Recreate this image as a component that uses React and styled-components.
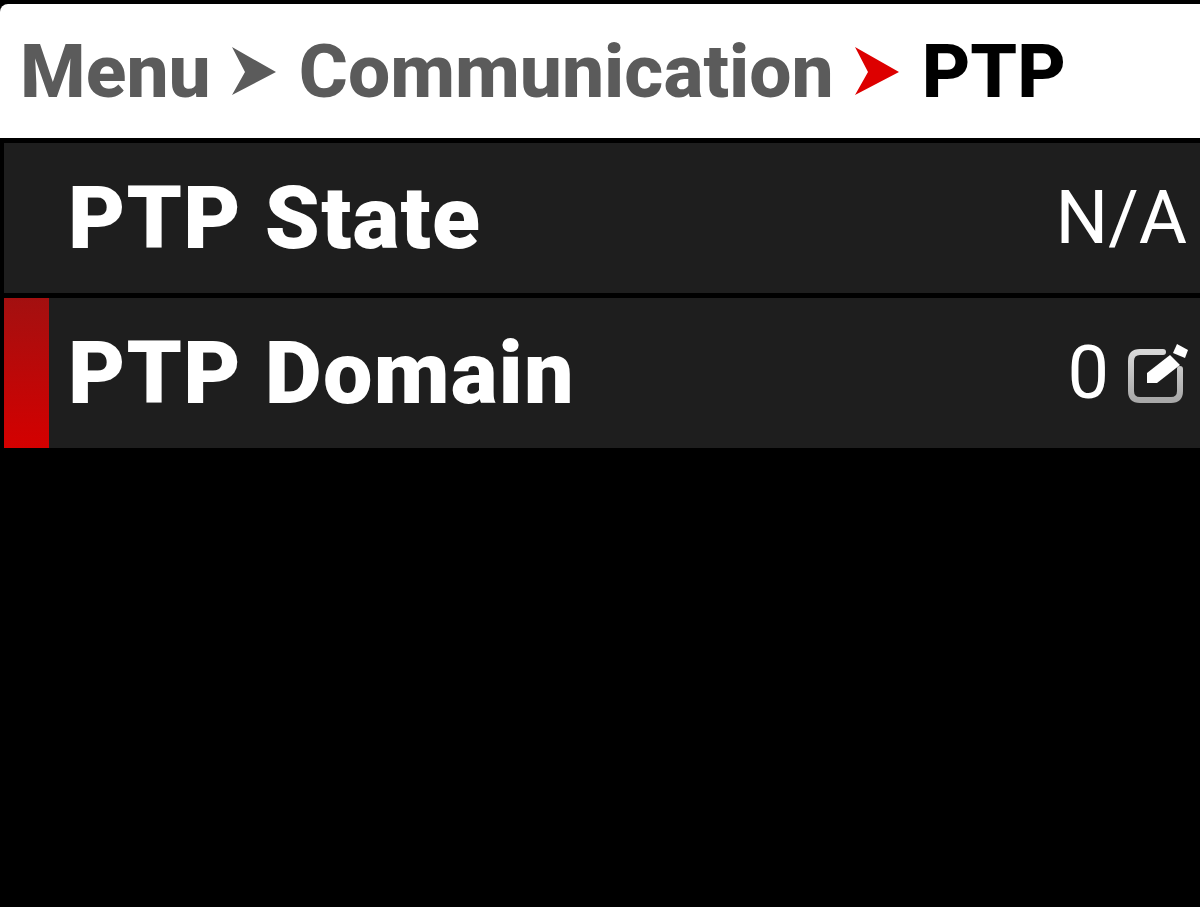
import React from "react";
import styled, { createGlobalStyle } from "styled-components";

const Global = createGlobalStyle`
  html, body { margin: 0; padding: 0; background: #000; }
  body { font-family: Roboto, "Liberation Sans", sans-serif; }
`;

const Screen = styled.div`
  width: 1200px;
  height: 907px;
  background: #000;
  overflow: hidden;
  padding-top: 4px;
  box-sizing: border-box;
`;

const Header = styled.header`
  height: 134px;
  background: #fff;
  border-top-left-radius: 8px;
  display: flex;
  align-items: center;
  padding-left: 20px;
  font-size: 75px;
  font-weight: 800;
  color: #5b5b5b;
`;

const Crumb = styled.span`
  color: ${(p) => (p.$current ? "#000" : "#5b5b5b")};
  line-height: 1;
`;

const ChevronIcon = styled.svg`
  width: 48px;
  height: 50px;
  margin: 0 21px 0 19px;
  flex: none;
`;

const List = styled.div`
  display: flex;
  flex-direction: column;
  gap: 5px;
  padding: 5px 0 0 4px;
`;

const Row = styled.div`
  height: 150px;
  background: #1e1e1e;
  display: flex;
  align-items: center;
`;

const Marker = styled.div`
  width: 45px;
  align-self: stretch;
  flex: none;
  background: ${(p) => (p.$active ? "linear-gradient(#a31010, #d40000)" : "transparent")};
`;

const Label = styled.div`
  margin-left: 19px;
  font-size: 88px;
  font-weight: 900;
  letter-spacing: 1.2px;
  color: #fff;
  flex: 1;
  line-height: 1;
`;

const Value = styled.div`
  font-size: 74px;
  font-weight: 400;
  color: #fff;
  line-height: 1;
  margin-right: 13px;
  display: flex;
  align-items: center;
  gap: 19px;
`;

const EditSvg = styled.svg`
  margin-right: -1px;
  flex: none;
`;

const Chevron = ({ color }) => (
  <ChevronIcon viewBox="0 0 48 50">
    <path d="M2 1 L46 26 L2 49 L15 26 Z" fill={color} />
  </ChevronIcon>
);

const EditIcon = () => (
  <EditSvg width="60" height="64" viewBox="0 0 60 64" fill="none">
    <defs>
      <linearGradient id="editBox" x1="0" y1="0" x2="0" y2="1">
        <stop offset="0" stopColor="#d8d8d8" />
        <stop offset="1" stopColor="#a8a8a8" />
      </linearGradient>
    </defs>
    <path
      d="M35 11 H12 Q3 11 3 20 V50 Q3 59 12 59 H43 Q52 59 52 50 V28"
      stroke="url(#editBox)"
      strokeWidth="6"
      strokeLinecap="round"
    />
    <path d="M19 42 L19 32 L42 14 L52 24 L29 42 Z" fill="#fff" />
    <path d="M45 12 L49 3 L60 9 L57 17 Z" fill="#fff" />
  </EditSvg>
);

export default function App() {
  return (
    <Screen>
      <Global />
      <Header>
        <Crumb>Menu</Crumb>
        <Chevron color="#5b5b5b" />
        <Crumb>Communication</Crumb>
        <Chevron color="#dd0000" />
        <Crumb $current>PTP</Crumb>
      </Header>
      <List>
        <Row>
          <Marker />
          <Label>PTP State</Label>
          <Value>N/A</Value>
        </Row>
        <Row>
          <Marker $active />
          <Label>PTP Domain</Label>
          <Value>
            0
            <EditIcon />
          </Value>
        </Row>
      </List>
    </Screen>
  );
}
